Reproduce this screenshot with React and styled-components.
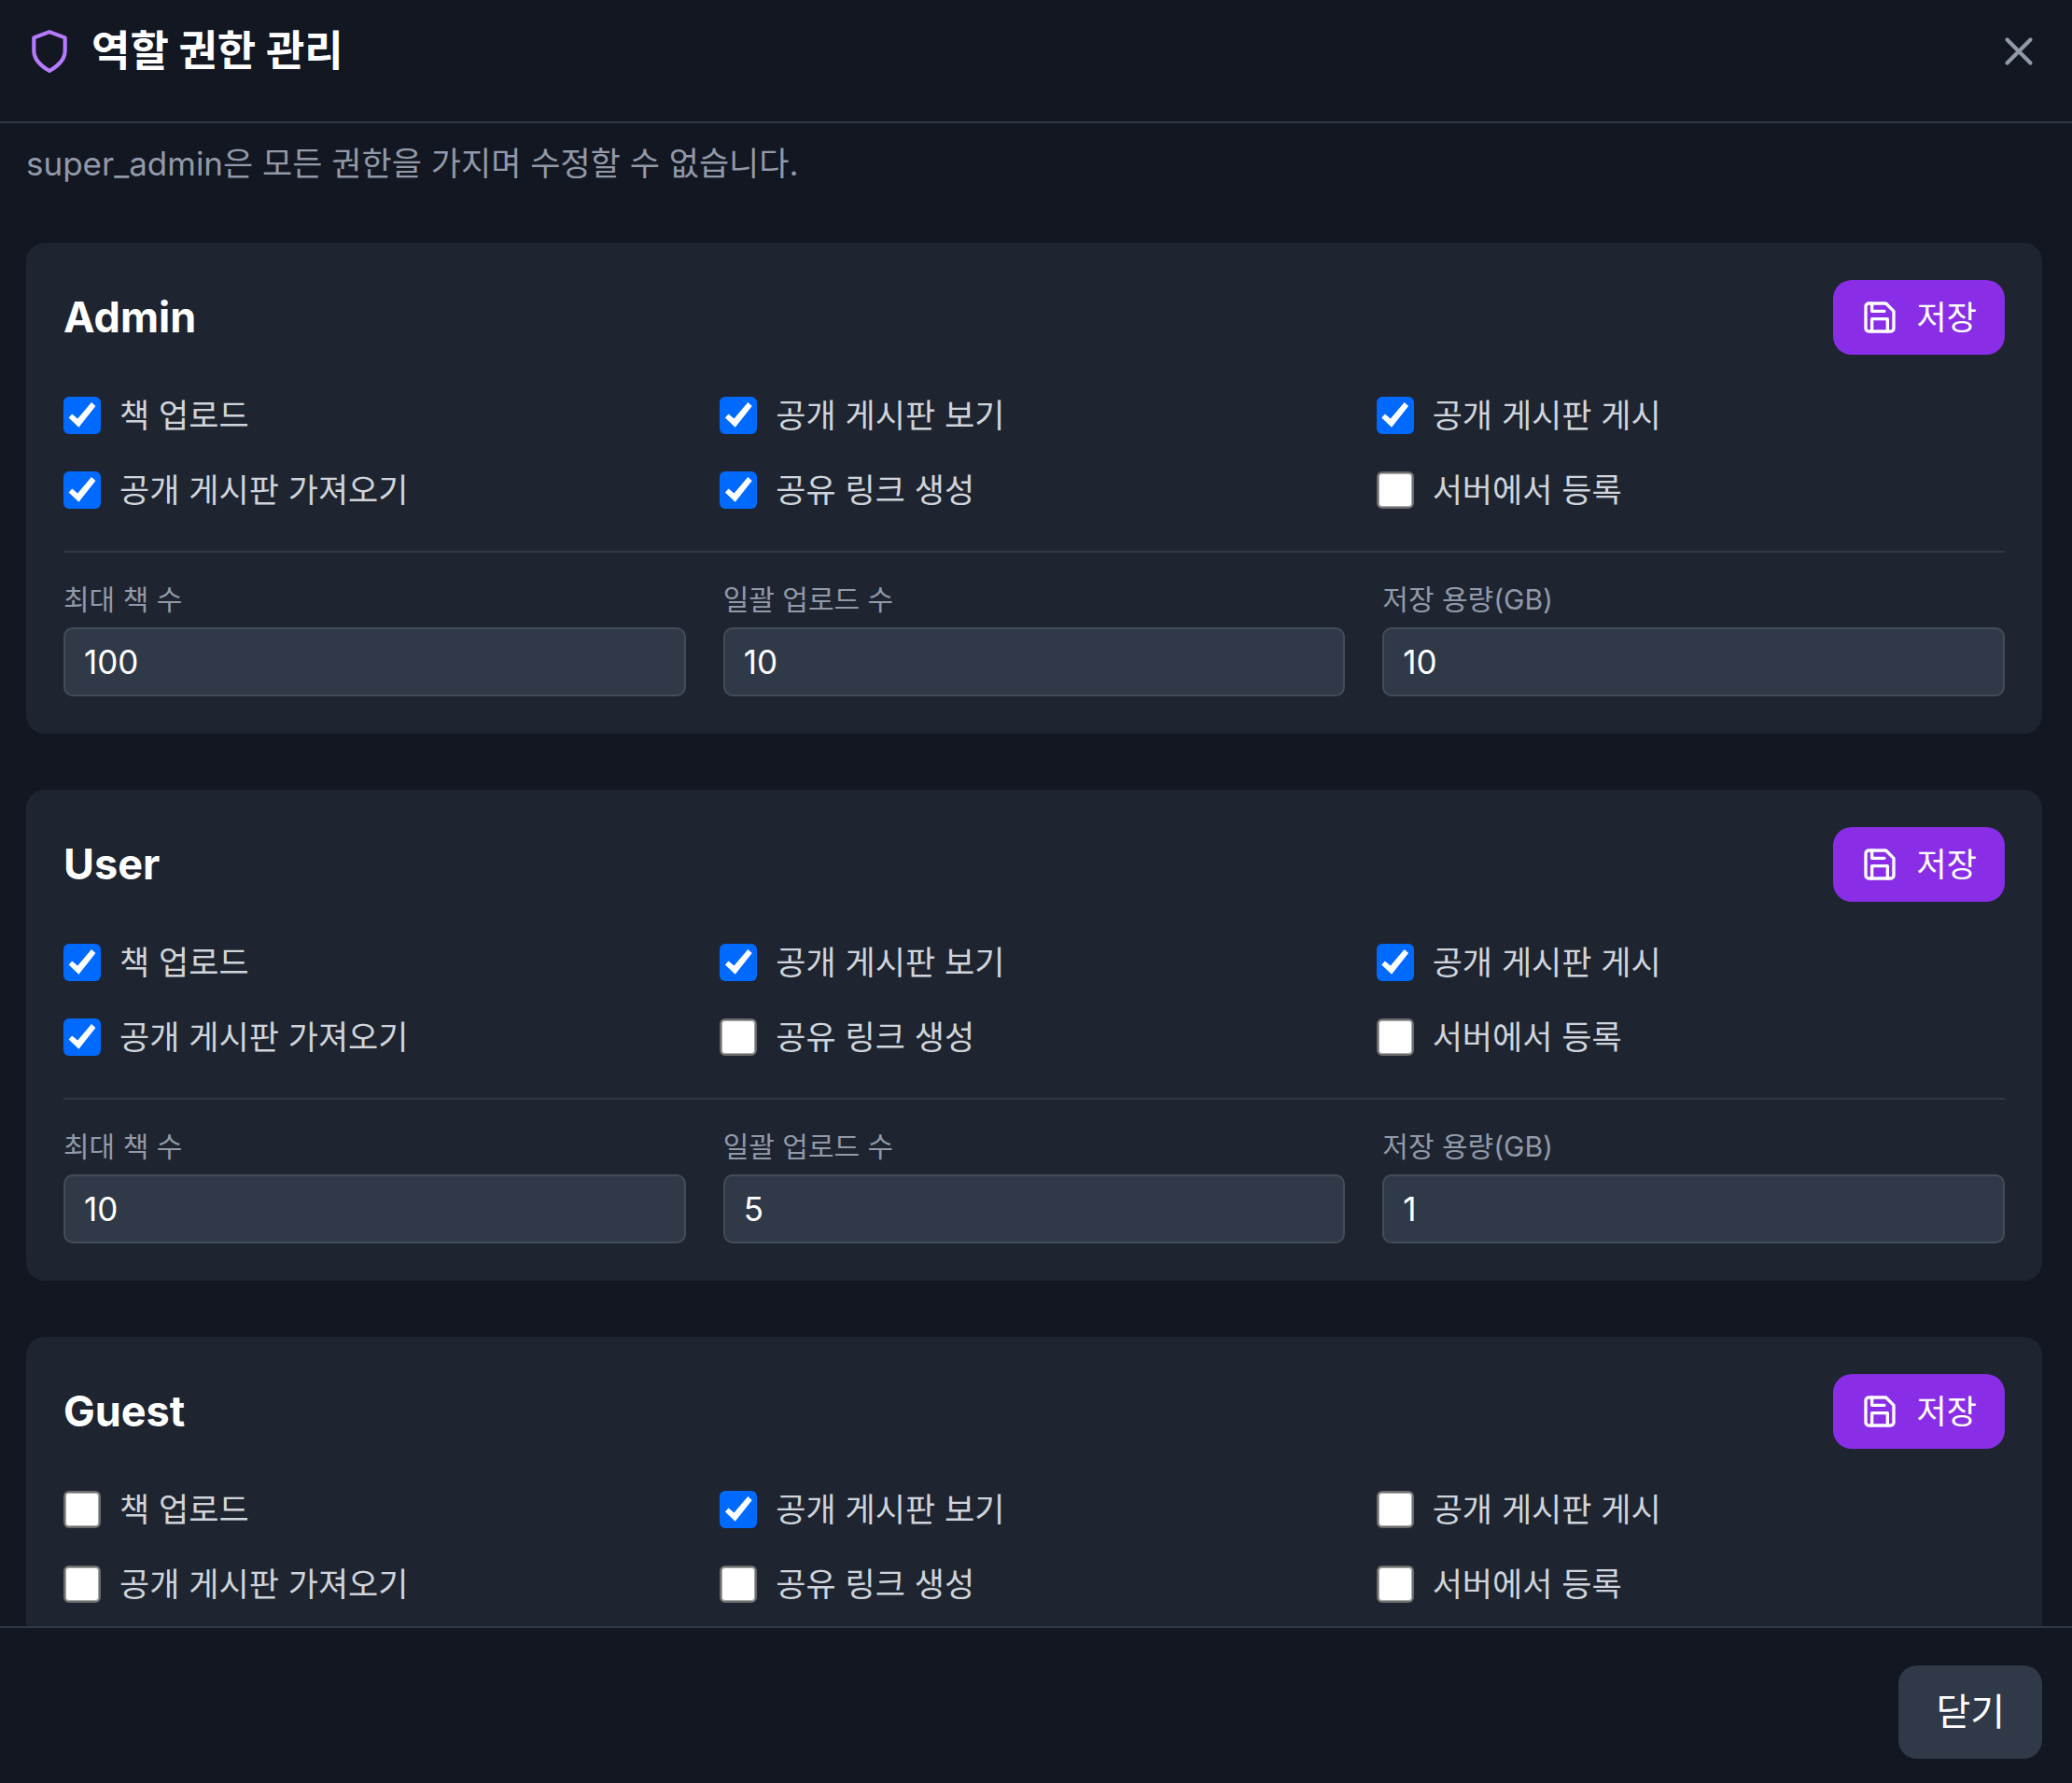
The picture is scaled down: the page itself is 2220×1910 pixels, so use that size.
import React, { useState } from "react";
import styled, { createGlobalStyle } from "styled-components";
import { X } from "lucide-react";

const GlobalStyle = createGlobalStyle`
  * {
    box-sizing: border-box;
  }

  body {
    margin: 0;
    background-color: #121722;
    font-family: Inter, "Noto Sans CJK KR", sans-serif;
  }

  button,
  input {
    font-family: inherit;
  }
`;

const Dialog = styled.div`
  display: flex;
  flex-direction: column;
  height: 100vh;
  background-color: #121722;
  color: white;
`;

const Header = styled.header`
  display: flex;
  align-items: center;
  justify-content: space-between;
  padding: 20px 32px 40px 28px;
  border-bottom: 2px solid #303948;
`;

const Title = styled.h2`
  display: flex;
  align-items: center;
  gap: 20px;
  margin: 0;
  font-size: 45px;
  font-weight: 700;
  line-height: 70px;
`;

const IconButton = styled.button`
  display: flex;
  padding: 0;
  border: none;
  background: none;
  color: #9299a8;
  cursor: pointer;
`;

const Content = styled.main`
  display: flex;
  flex: 1;
  flex-direction: column;
  gap: 60px;
  min-height: 0;
  padding: 18px 32px 40px 28px;
  overflow-y: auto;
  scrollbar-width: none;
`;

const Description = styled.p`
  margin: 0;
  color: #9299a8;
  font-size: 35px;
  line-height: 50px;
`;

const Card = styled.section`
  padding: 40px;
  border-radius: 20px;
  background-color: #1e2530;
`;

const CardHeader = styled.div`
  display: flex;
  align-items: center;
  justify-content: space-between;
  margin-bottom: 40px;
`;

const RoleName = styled.h3`
  margin: 0;
  font-size: 45px;
  font-weight: 700;
  line-height: 70px;
`;

const SaveButton = styled.button`
  display: flex;
  align-items: center;
  gap: 20px;
  padding: 15px 30px;
  border: none;
  border-radius: 20px;
  background-color: #892ee6;
  color: white;
  font-size: 35px;
  line-height: 50px;
  cursor: pointer;
`;

const PermissionGrid = styled.div`
  display: grid;
  grid-template-columns: repeat(3, 1fr);
  gap: 30px;
`;

const PermissionLabel = styled.label`
  display: flex;
  align-items: center;
  gap: 20px;
  color: #d0d4da;
  font-size: 35px;
  line-height: 50px;
  cursor: pointer;
`;

const Checkbox = styled.input`
  display: grid;
  width: 40px;
  height: 40px;
  margin: 0;
  border: 2px solid #6c6c6c;
  border-radius: 6px;
  background-color: white;
  box-shadow: inset 0 0 0 1px #a8a8a8;
  appearance: none;
  cursor: pointer;

  &:checked {
    border: none;
    background-color: #006aff;
    box-shadow: none;
  }

  &:checked::before {
    content: "";
    background-color: white;
    clip-path: polygon(14% 56%, 23% 46%, 38% 59%, 75% 15%, 86% 25%, 41% 82%);
  }
`;

const LimitGrid = styled.div`
  display: grid;
  grid-template-columns: repeat(3, 1fr);
  gap: 40px;
  margin-top: 40px;
  padding-top: 30px;
  border-top: 2px solid #303948;
`;

const LimitLabel = styled.label`
  display: block;
  margin-bottom: 10px;
  color: #9299a8;
  font-size: 30px;
  line-height: 40px;
`;

const LimitInput = styled.input`
  display: block;
  width: 100%;
  height: 74px;
  padding: 10px 20px;
  border: 2px solid #434c59;
  border-radius: 10px;
  background-color: #303948;
  color: white;
  font-size: 35px;
  line-height: 50px;
  appearance: textfield;
`;

const Footer = styled.footer`
  display: flex;
  justify-content: flex-end;
  padding: 40px 32px 26px 28px;
  border-top: 2px solid #303948;
`;

const CloseButton = styled.button`
  padding: 20px 40px;
  border: none;
  border-radius: 20px;
  background-color: #303948;
  color: white;
  font-size: 40px;
  line-height: 60px;
  cursor: pointer;
`;

const PERMISSIONS = [
  { key: "upload", label: "책 업로드" },
  { key: "boardView", label: "공개 게시판 보기" },
  { key: "boardPost", label: "공개 게시판 게시" },
  { key: "boardImport", label: "공개 게시판 가져오기" },
  { key: "shareLink", label: "공유 링크 생성" },
  { key: "serverRegister", label: "서버에서 등록" },
];

const LIMITS = [
  { key: "maxBooks", label: "최대 책 수" },
  { key: "bulkUpload", label: "일괄 업로드 수" },
  { key: "storage", label: "저장 용량(GB)" },
];

// guests can't upload, so they have no limits to edit
const ROLES = [
  {
    name: "Admin",
    allowed: ["upload", "boardView", "boardPost", "boardImport", "shareLink"],
    limits: { maxBooks: 100, bulkUpload: 10, storage: 10 },
  },
  {
    name: "User",
    allowed: ["upload", "boardView", "boardPost", "boardImport"],
    limits: { maxBooks: 10, bulkUpload: 5, storage: 1 },
  },
  {
    name: "Guest",
    allowed: ["boardView"],
  },
];

const Icon = ({ size, color = "currentColor", children }) => (
  <svg
    width={size}
    height={size}
    viewBox="0 0 24 24"
    fill="none"
    stroke={color}
    strokeWidth="2"
    strokeLinecap="round"
    strokeLinejoin="round"
    aria-hidden="true"
  >
    {children}
  </svg>
);

const ShieldIcon = () => (
  <Icon size={50} color="#b67aff">
    <path d="M12 22s8-4 8-10V5l-8-3-8 3v7c0 6 8 10 8 10z" />
  </Icon>
);

const SaveIcon = () => (
  <Icon size={40}>
    <path d="M19 21H5a2 2 0 0 1-2-2V5a2 2 0 0 1 2-2h11l5 5v11a2 2 0 0 1-2 2z" />
    <polyline points="17 21 17 13 7 13 7 21" />
    <polyline points="7 3 7 8 15 8" />
  </Icon>
);

const RoleCard = ({ role }) => {
  const [allowed, setAllowed] = useState(role.allowed);
  const [limits, setLimits] = useState(role.limits);

  const togglePermission = (key) => {
    setAllowed(
      allowed.includes(key)
        ? allowed.filter((item) => item !== key)
        : [...allowed, key]
    );
  };

  return (
    <Card>
      <CardHeader>
        <RoleName>{role.name}</RoleName>
        <SaveButton type="button">
          <SaveIcon />
          저장
        </SaveButton>
      </CardHeader>
      <PermissionGrid>
        {PERMISSIONS.map(({ key, label }) => (
          <PermissionLabel key={key}>
            <Checkbox
              type="checkbox"
              checked={allowed.includes(key)}
              onChange={() => togglePermission(key)}
            />
            {label}
          </PermissionLabel>
        ))}
      </PermissionGrid>
      {limits && (
        <LimitGrid>
          {LIMITS.map(({ key, label }) => (
            <div key={key}>
              <LimitLabel htmlFor={`${role.name}-${key}`}>{label}</LimitLabel>
              <LimitInput
                id={`${role.name}-${key}`}
                type="number"
                value={limits[key]}
                onChange={(e) =>
                  setLimits({ ...limits, [key]: e.target.value })
                }
              />
            </div>
          ))}
        </LimitGrid>
      )}
    </Card>
  );
};

const App = () => {
  return (
    <>
      <GlobalStyle />
      <Dialog role="dialog" aria-labelledby="dialog-title">
        <Header>
          <Title id="dialog-title">
            <ShieldIcon />
            역할 권한 관리
          </Title>
          <IconButton type="button" aria-label="닫기">
            <X size={50} />
          </IconButton>
        </Header>
        <Content>
          <Description>
            super_admin은 모든 권한을 가지며 수정할 수 없습니다.
          </Description>
          {ROLES.map((role) => (
            <RoleCard key={role.name} role={role} />
          ))}
        </Content>
        <Footer>
          <CloseButton type="button">닫기</CloseButton>
        </Footer>
      </Dialog>
    </>
  );
};

export default App;
